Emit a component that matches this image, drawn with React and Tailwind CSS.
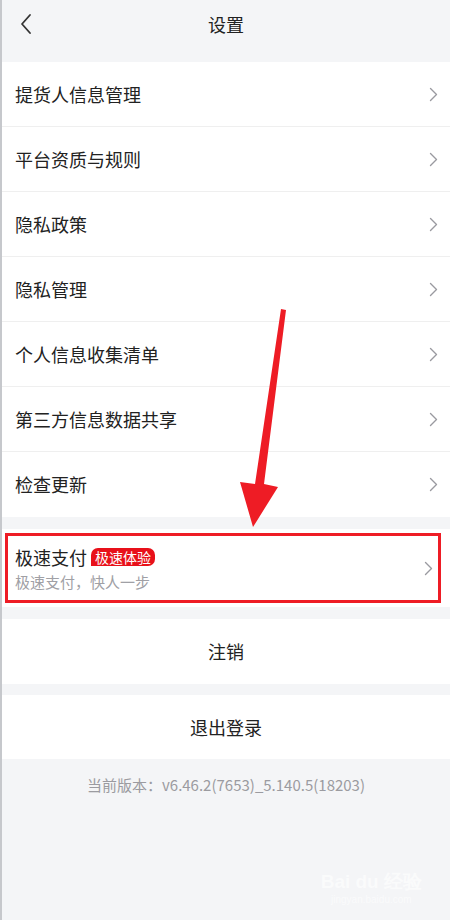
import React from "react";

const font = { fontFamily: '"Noto Sans CJK SC", "Noto Sans", sans-serif' };

// --- chevron used on each row ---
const Chevron = () => (
  <svg width="9" height="15" viewBox="0 0 9 15" fill="none">
    <path d="M1.5 1.5 L7.5 7.5 L1.5 13.5" stroke="#9a9aa0" strokeWidth="1.4" strokeLinecap="round" strokeLinejoin="round" />
  </svg>
);

const Row = ({ label, last }) => (
  <div className={`h-[65px] flex items-center justify-between pl-[13px] pr-[12px] bg-white ${last ? "" : "border-b border-[#efefef]"}`}>
    <span className="text-[18px] text-[#222]">{label}</span>
    <Chevron />
  </div>
);

const items = [
  "提货人信息管理",
  "平台资质与规则",
  "隐私政策",
  "隐私管理",
  "个人信息收集清单",
  "第三方信息数据共享",
  "检查更新",
];

export default function App() {
  return (
    <div style={font} className="relative w-[450px] h-[920px] bg-[#f4f5f7] overflow-hidden border-l-2 border-[#c6c8cc]">
      {/* header */}
      <div className="h-[62px] relative flex items-center justify-center bg-[#f4f5f7] pb-[14px]">
        <svg className="absolute left-[17px] top-[13px]" width="14" height="22" viewBox="0 0 14 22" fill="none">
          <path d="M11 2 L3 11 L11 20" stroke="#333" strokeWidth="1.8" strokeLinecap="round" strokeLinejoin="round" />
        </svg>
        <span className="text-[18px] text-[#222]">设置</span>
      </div>

      {/* settings list */}
      <div className="bg-white">
        {items.map((t, i) => (
          <Row key={t} label={t} last={i === items.length - 1} />
        ))}
      </div>

      {/* fast pay */}
      <div className="mt-[12px] h-[78px] bg-white pl-[3px] pr-[9px] py-[4px]">
        <div className="h-full border-[3px] border-[#ee1c25] flex items-center justify-between pl-[7px] pr-[5px]">
          <div className="flex flex-col">
            <div className="flex items-center gap-[4px]">
              <span className="text-[18px] text-[#222] leading-[24px]">极速支付</span>
              <span className="bg-[#e8101a] text-white text-[14px] leading-[18px] px-[4px] rounded-[7px] rounded-bl-none">极速体验</span>
            </div>
            <span className="text-[15px] text-[#a0a0a5] leading-[20px] mt-[3px]">极速支付，快人一步</span>
          </div>
          <Chevron />
        </div>
      </div>

      {/* cancel */}
      <div className="mt-[12px] h-[65px] bg-white flex items-center justify-center">
        <span className="text-[18px] text-[#222]">注销</span>
      </div>

      {/* logout */}
      <div className="mt-[11px] h-[64px] bg-white flex items-center justify-center">
        <span className="text-[18px] text-[#222]">退出登录</span>
      </div>

      <div className="pt-[15px] text-center text-[15px] text-[#9b9ba0]">
        当前版本：v6.46.2(7653)_5.140.5(18203)
      </div>

      {/* annotation arrow */}
      <svg className="absolute left-0 top-0 pointer-events-none" width="450" height="920" viewBox="0 0 450 920">
        <path d="M279 309 L284 310 L262 484 L276 487 L251 527 L238 482 L253 484 Z" fill="#ee1c25" />
      </svg>

      {/* watermark */}
      <div className="absolute right-[28px] bottom-[14px] flex flex-col items-center text-white opacity-60" style={{ fontFamily: '"Liberation Sans", sans-serif' }}>
        <span className="text-[19px] font-bold leading-[22px]">Bai du 经验</span>
        <span className="text-[10px] leading-[13px]">jingyan.baidu.com</span>
      </div>
    </div>
  );
}
